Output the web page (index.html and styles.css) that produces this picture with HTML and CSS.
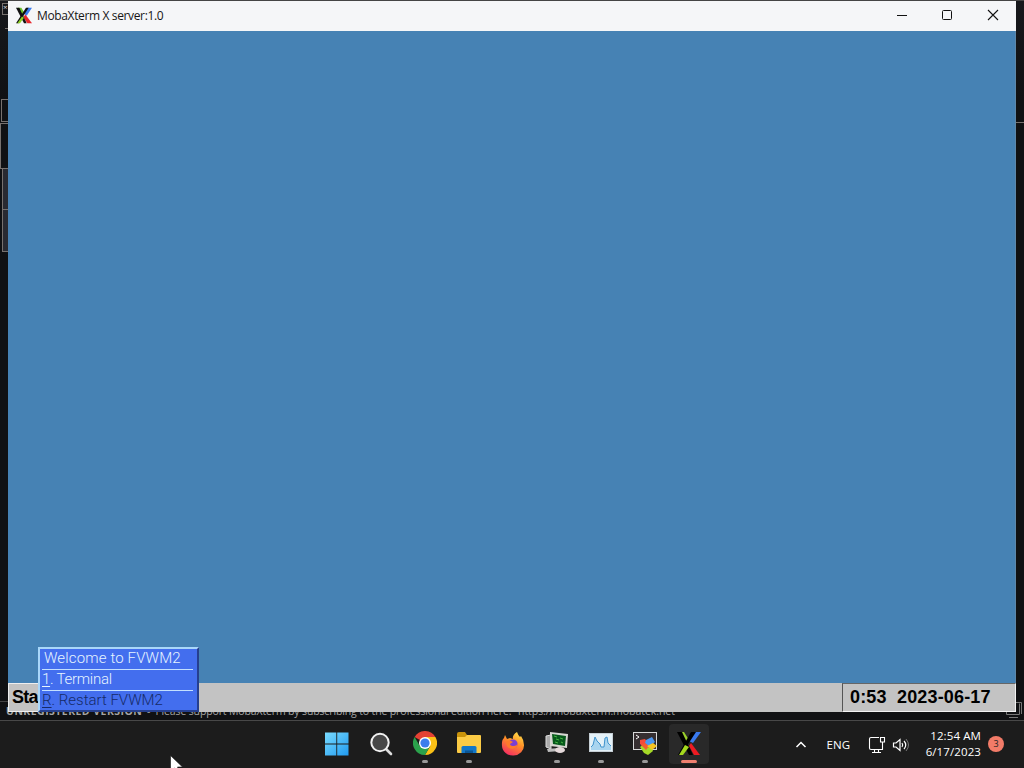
FILE: index.html
```
<!DOCTYPE html>
<html>
 <head>
  <meta charset="utf-8">
  <title>MobaXterm X server:1.0</title>
  <link rel="stylesheet" href="styles.css">
 </head>

<body>
 <div id="desktop">

  <!-- terminal window that is behind the X server -->
  <div class="behind">
   <div class="edge tabIcon">&#215;</div>
   <div class="edge tick"></div>
   <div class="edge box1"></div>
   <div class="edge box2"></div>
   <div class="edge box3"></div>
   <div class="edge box4"></div>
   <div class="edge rightLine"></div>
   <div class="edge footLine"></div>
   <div class="footer"><b>UNREGISTERED VERSION</b><span class="support">-&nbsp; Please support MobaXterm by subscribing to the professional edition here:</span><span class="link">https://mobaxterm.mobatek.net</span></div>
   <svg class="grip" width="18" height="18" viewBox="0 0 18 18"><path d="M1.500 9v3.500h13V1.500M11 .500h5.500v11.500M4 15.500h9" fill="none" stroke="#777"/></svg>
  </div>

  <div class="window">
   <div class="titlebar">
    <svg class="logo" width="16" height="17" viewBox="0 0 24 25">
     <path d="M3 1h5l5 8-3 4z" fill="#6cc42c"/><path d="M17 1h7l-8 12-4-3z" fill="#3b7cf0"/>
     <path d="M14 11l10 13h-7l-6-9z" fill="#e8262c"/>
     <path d="M0 1h5l11 23h-4z" fill="#111"/><path d="M15 1h4L4 24H0z" fill="#111"/>
     <path d="M9 14l3 2-6 8H2z" fill="#8fd326"/>
    </svg>
    <span class="title">MobaXterm X server:1.0</span>
    <svg class="controls" width="110" height="12" viewBox="0 0 110 12"><path d="M4 6.500h10" stroke="#111"/><rect x="49.500" y="1.500" width="9" height="9" rx="1" fill="none" stroke="#111"/><path d="M95 1l10 10M105 1l-10 10" stroke="#111" stroke-width="1.100"/></svg>
   </div>
   <div class="root"></div>
   <div class="panel">
    <div class="start">Sta</div>
    <div class="clock">0:53&nbsp; 2023-06-17</div>
   </div>
  </div>

  <ul class="fvwmMenu">
   <li class="menuTitle">Welcome to FVWM2</li>
   <li class="item"><u>1</u>. Terminal</li>
   <li class="item restart"><u>R</u>. Restart FVWM2</li>
  </ul>

  <div class="taskbar">
   <div class="apps">
    <div class="app">
     <svg width="24" height="24" viewBox="0 0 24 24">
      <defs><linearGradient id="win" x1="0" y1="0" x2="1" y2="1"><stop offset="0" stop-color="#7adcff"/><stop offset="1" stop-color="#209af0"/></linearGradient></defs>
      <path d="M0 .500h11.300v11H0zM12.200.500h11.300v11H12.200zM0 12.400h11.300v11.100H0zM12.200 12.400h11.300v11.100H12.200z" fill="url(#win)"/>
     </svg>
    </div>
    <div class="app">
     <svg width="24" height="24" viewBox="0 0 24 24"><path d="M17 17l5 5" stroke="#ddd" stroke-width="2.600" stroke-linecap="round"/><circle cx="11" cy="10.500" r="8.700" fill="#484848" stroke="#f0f0f0" stroke-width="2"/></svg>
    </div>
    <div class="app running">
     <svg width="24" height="24" viewBox="0 0 24 24">
      <path d="M12 12L1.600 6A12 12 0 0 1 22.400 6z" fill="#e34133"/>
      <path d="M12 6h10.400a12 12 0 0 1-10.400 18l5.200-9z" fill="#fbc116"/>
      <path d="M1.600 6A12 12 0 0 0 12 24l5.200-9-10.400 0z" fill="#2ba24c"/>
      <circle cx="12" cy="12" r="6" fill="#fff"/><circle cx="12" cy="12" r="4.600" fill="#3b7ded"/>
     </svg>
    </div>
    <div class="app running">
     <svg width="26" height="24" viewBox="0 0 26 24"><path d="M1 3q0-2 2-2h6l2 3v5H1z" fill="#c9930b"/><path d="M1 6h8l2-2h13q1 0 1 1v16q0 1-1 1H2q-1 0-1-1z" fill="#fbcb45"/><path d="M5.500 22v-5.500q0-1.500 1.500-1.500h12q1.500 0 1.500 1.500V22z" fill="#1277c9"/><path d="M9 22v-2.500h8V22z" fill="#0b5695"/></svg>
    </div>
    <div class="app">
     <svg width="24" height="24" viewBox="0 0 24 24">
      <defs><linearGradient id="fox" x1=".8" y1="0" x2=".3" y2="1"><stop offset="0" stop-color="#ffe14a"/><stop offset=".45" stop-color="#ff9026"/><stop offset="1" stop-color="#f52c63"/></linearGradient></defs>
      <path d="M4 3l2 4 3-1 3 1q-1-4 4-7 1 3 3 5l1-1q3 4 3 9a11 10 0 0 1-22 1Q.5 8 3 6z" fill="url(#fox)"/>
      <circle cx="12" cy="12" r="4.600" fill="#7b3fd3"/><path d="M5 10q3-3 7 0l-3 2q0 2 4 2 2 0 4-2-1 5-6 5-6-1-6-7z" fill="#ff7a2b"/>
     </svg>
    </div>
    <div class="app running">
     <svg width="26" height="24" viewBox="0 0 26 24"><path d="M2 5l5-1v14l-5-2z" fill="#aaa" stroke="#ddd"/><path d="M6 1l18 2-1 14-17-2z" fill="#d7d7d2"/><path d="M8 3l14 2-1 10-12-2z" fill="#07591b"/><path d="M10 5l3 1M12 8l3 1M16 7l3 1M11 11l3 1M17 11l2 1" stroke="#48b844"/><path d="M3 18l12-1 1 3-12 1z" fill="#bcbcbc"/><ellipse cx="16" cy="19" rx="5" ry="3" fill="#e5d9da"/></svg>
    </div>
    <div class="app running">
     <svg width="24" height="20" viewBox="0 0 24 20"><rect x=".5" y=".5" width="23" height="18" fill="#e4f1f7" stroke="#c6cfd5"/><path d="M2 14l2-2 2-8 2 4 3 3 1 3h3l1-9 2-1 1 6 3 3v4H2z" fill="#a9d5ef"/><path d="M2 14l2-2 2-8 2 4 3 3 1 3h3l1-9 2-1 1 6 3 3" fill="none" stroke="#3f93cd"/></svg>
    </div>
    <div class="app running">
     <svg width="26" height="24" viewBox="0 0 26 24"><rect x="1.500" y="1.500" width="23" height="17" fill="#362f31" stroke="#d8d8d8"/><path d="M4 4l3 2-3 2" stroke="#fff" fill="none"/><path d="M8 9l5-1 3 4-3 5-5-4z" fill="#f34b39"/><path d="M14 9l6-3 3 5-6 5-4-4z" fill="#4c97f0"/><path d="M8 16l4-3 4 3 4 1 1 3-5 4-4-2z" fill="#a6da27"/><path d="M9 14l4-2 4 3-3 4z" fill="#f25b30"/><path d="M15 15l6-3 4 3-5 4z" fill="#f7c421"/></svg>
    </div>
    <div class="app running current">
     <svg width="24" height="25" viewBox="0 0 24 25"><path d="M3 1h4l5 8-2 4z" fill="#9bd02b"/><path d="M17 1h7l-8 11-4-2z" fill="#3979ee"/><path d="M14 12l9 12h-6l-5-9z" fill="#ee1b22"/><path d="M0 1h5l11 23h-4z" fill="#000"/><path d="M14 1h5L4 24H1z" fill="#000"/><path d="M8 14l4 2-6 8H2z" fill="#a5d91e"/></svg>
    </div>
   </div>

   <div class="tray">
    <svg class="chevron" width="12" height="8" viewBox="0 0 12 8"><path d="M1.500 6L6 1.500 10.500 6" fill="none" stroke="#fff" stroke-width="1.500"/></svg>
    <span class="lang">ENG</span>
    <svg class="net" width="18" height="18" viewBox="0 0 18 18"><path d="M11 1.500H3q-1.500 0-1.500 1.500v9q0 1.500 1.500 1.500h11.500V6M6.500 13.500v3M10.500 13.500v3M4 16.500h9M12.500 1.500h4V6h-4z" fill="none" stroke="#fff" stroke-width="1.100"/></svg>
    <svg class="sound" width="18" height="16" viewBox="0 0 18 16"><path d="M1.500 6v4H4l4 3.500v-11L4 6z" fill="none" stroke="#fff" stroke-width="1.200"/><path d="M10 6q1.500 2 0 4M12 4q3.500 4 0 8" fill="none" stroke="#fff" stroke-width="1.200"/><path d="M14 2q5 6 0 12" fill="none" stroke="#777"/></svg>
    <div class="date"><span class="time">12:54 AM</span><br>6/17/2023</div>
    <span class="badge">3</span>
   </div>
  </div>

  <svg class="pointer" width="14" height="20" viewBox="0 0 14 20"><path d="M.5.500v16l4-3.500 3 6.500 3-1-3-6.500h5z" fill="#fff" stroke="#111" stroke-width=".6"/></svg>

 </div>
</body>
</html>
```
FILE: styles.css
```
body {
      margin: 0;
      overflow: hidden;
      background-color: #111214;
      font-family: "Open Sans", "Noto Sans", sans-serif;
     }

#desktop {
          position: relative;
          width: 1024px;
          height: 768px;
          overflow: hidden;
          background: linear-gradient(#454545 1px, #17181c 1px, #101113 100px);
         }

.behind .edge {
               position: absolute;
               box-sizing: border-box;
               border: 1px solid #77716e;
              }

.behind .tabIcon { left: 2px; top: 3px; width: 14px; height: 12px; color: #ddd; font-size: 8px; line-height: 6px; }
.behind .tick { left: 5px; top: 28px; width: 5px; height: 1px; border-width: 1px 0 0 0; }
.behind .box1 { left: 1px; top: 99px; width: 12px; height: 23px; }
.behind .box2 { left: 0; top: 123px; width: 12px; height: 46px; }
.behind .box3 { left: 2px; top: 168px; width: 12px; height: 42px; background-color: #292a31; }
.behind .box4 { left: 2px; top: 209px; width: 12px; height: 43px; background-color: #292a31; }
.behind .rightLine { left: 1016px; top: 122px; width: 8px; height: 1px; border-width: 1px 0 0 0; }
.behind .footLine { left: 0; top: 701px; width: 8px; height: 1px; border-width: 1px 0 0 0; border-color: #444; }

.behind .footer {
                 position: absolute;
                 left: 6px;
                 top: 703px;
                 font-size: 10.5px;
                 line-height: 16px;
                 color: #a5a5a5;
                 white-space: nowrap;
                }

.footer b { display: inline-block; width: 141px; letter-spacing: 0.45px; }
.footer .support { display: inline-block; width: 371px; letter-spacing: -0.14px; }
.footer .link { letter-spacing: -0.05px; }

.grip {
       position: absolute;
       left: 1005px;
       top: 702px;
      }

.window {
         position: absolute;
         left: 8px;
         top: 1px;
         width: 1008px;
         height: 711px;
         display: flex;
         flex-direction: column;
        }

.titlebar {
           display: flex;
           align-items: center;
           height: 30px;
           box-sizing: border-box;
           padding: 0 13px 2px 8px;
           background-color: #f5f6f8;
          }

.titlebar .title {
                  margin-left: 5px;
                  flex: 1;
                  font-size: 12px;
                  letter-spacing: -0.36px;
                  color: #151515;
                 }

.root {
       flex: 1;
       background-color: #4682b4;
       border-right: 1px solid #5e88aa;
      }

.panel {
        display: flex;
        height: 29px;
        background-color: #c3c3c3;
        font-family: "Liberation Sans", Arial, sans-serif;
        font-size: 18px;
        font-weight: bold;
        line-height: 26px;
        color: #000;
       }

.panel .start {
               box-sizing: border-box;
               width: 30px;
               padding-left: 3px;
               border: 1px solid #eee;
               border-right: 0;
               letter-spacing: -0.7px;
              }

.panel .clock {
               box-sizing: border-box;
               width: 174px;
               margin-left: auto;
               padding-left: 7px;
               border: 1px solid #f2f2f2;
               border-left-color: #555;
               border-top-color: #666;
               letter-spacing: 0.16px;
               white-space: nowrap;
              }

.fvwmMenu {
           position: absolute;
           left: 38px;
           top: 647px;
           box-sizing: border-box;
           width: 161px;
           height: 65px;
           margin: 0;
           padding: 0 4px 0 2px;
           list-style-type: none;
           background-color: #436eee;
           border: 2px solid #a9d7fa;
           border-right-color: #263f8e;
           border-bottom-color: #263f8e;
           font-family: "Roboto", "Liberation Sans", sans-serif;
           font-weight: 300;
           font-size: 15px;
           line-height: 18px;
           color: #e6f4ff;
           white-space: nowrap;
          }

.fvwmMenu .menuTitle { padding-left: 2px; letter-spacing: 0.15px; }

.fvwmMenu .item {
                 margin-top: 2px;
                 border-top: 1px solid #c3e0ff;
                 letter-spacing: -0.25px;
                }

.fvwmMenu u { text-underline-offset: 2px; text-decoration-thickness: 1px; }
.fvwmMenu .restart { color: #162a68; letter-spacing: 0; }

.taskbar {
          position: absolute;
          left: 0;
          top: 720px;
          box-sizing: border-box;
          width: 1024px;
          height: 48px;
          display: flex;
          background-color: #1c1c1c;
          border-top: 1px solid #484848;
         }

.apps {
       display: flex;
       gap: 4px;
       margin-left: 317px;
       padding-top: 3px;
      }

.app {
      display: flex;
      flex-direction: column;
      align-items: center;
      justify-content: center;
      width: 39px;
      height: 40px;
      margin-right: 1px;
      border-radius: 4px;
     }

.running { justify-content: flex-start; width: 40px; margin-right: 0; }
.running svg { margin: auto 0; transform: translateY(1px); }

.running::after {
                 content: "";
                 width: 6px;
                 height: 3px;
                 margin-bottom: 1px;
                 border-radius: 2px;
                 background-color: #999;
                }

.current { background-color: #292929; }
.current::after { width: 16px; background-color: #f08070; }

.tray {
       display: flex;
       align-items: center;
       margin-left: auto;
       padding-right: 20px;
       color: #fff;
       font-size: 11.5px;
      }

.tray .lang { margin: 0 18px 0 20px; letter-spacing: 0; }
.tray .sound { margin-left: 6px; }

.tray .date {
             width: 71px;
             margin-top: -2px;
             text-align: right;
             font-size: 11.5px;
             line-height: 16px;
             letter-spacing: 0.1px;
             white-space: nowrap;
            }

.tray .badge {
              width: 16px;
              height: 16px;
              margin-left: 7px;
              margin-top: -2px;
              border-radius: 8px;
              background-color: #f27b68;
              color: #222;
              font-size: 9px;
              line-height: 16px;
              text-align: center;
             }

.pointer {
          position: absolute;
          left: 170px;
          top: 755px;
         }
```
